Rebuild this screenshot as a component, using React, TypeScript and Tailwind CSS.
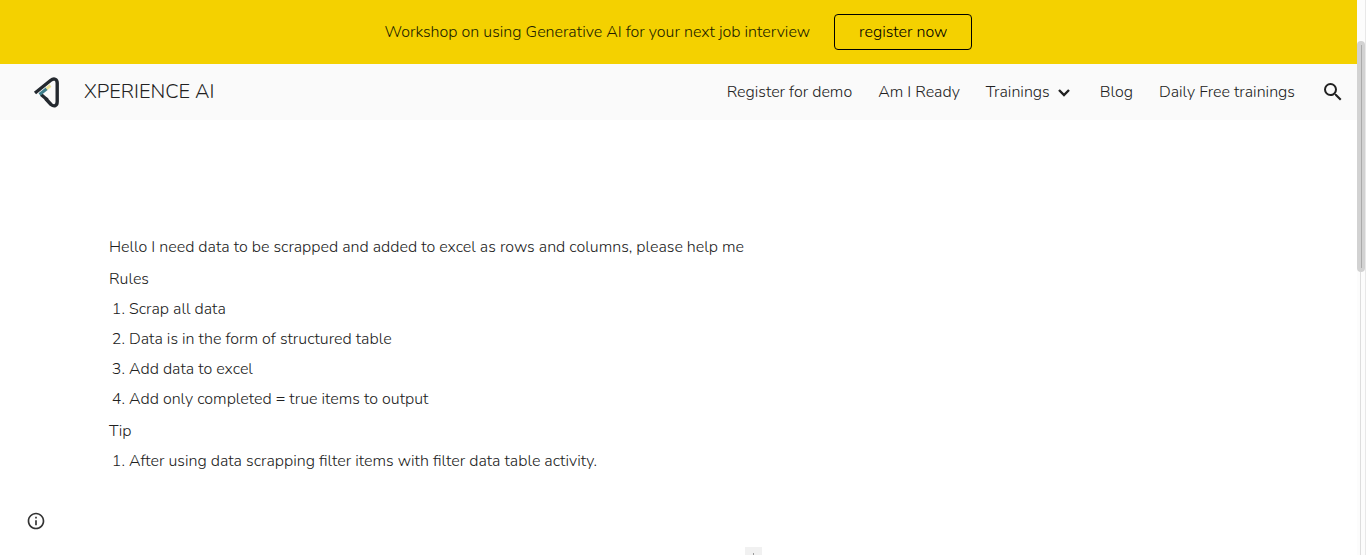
import { MdOutlineInfo, MdSearch } from "react-icons/md";

const rules = [
  "Scrap all data",
  "Data is in the form of structured table",
  "Add data to excel",
  "Add only completed = true items to output",
];

function Logo() {
  return (
    <svg viewBox="0 0 28 32" className="h-8 w-7" fill="none" aria-hidden="true">
      <path d="M9 18.500 15.500 24" stroke="#24292f" strokeWidth="3.2" />
      <path
        d="M3 17 18.500 4.500C22 1.800 25.200 3 25.200 7V25.500C25.200 30 22 31 19 28.500L13.500 22.500"
        stroke="#24292f"
        strokeWidth="3.400"
        strokeLinejoin="round"
      />
      <path d="M7.500 18.500 15 12.500" stroke="#3f7f8c" strokeWidth="3" />
      <path d="M14.500 12.800 18.500 9.500" stroke="#eee39a" strokeWidth="3" />
    </svg>
  );
}

function Chevron() {
  return (
    <svg viewBox="0 0 12 8" className="mt-0.5 h-2 w-3" fill="none" aria-hidden="true">
      <path d="M1 1 6 6 11 1" stroke="currentColor" strokeWidth="2.4" />
    </svg>
  );
}

function Banner() {
  return (
    <div className="flex h-16 items-center justify-center gap-6 bg-[#f4d100] text-base text-[#211c00]">
      <p>Workshop on using Generative AI for your next job interview</p>
      <a href="#register" className="flex h-9 items-center rounded border border-black px-6 text-black">
        register now
      </a>
    </div>
  );
}

function Header() {
  return (
    <header className="flex h-14 items-center justify-between bg-[#fafafa] pr-3 pl-8 text-[#212121]">
      <a href="#home" className="flex items-center gap-6 text-xl">
        <Logo />
        XPERIENCE AI
      </a>
      <nav className="flex items-center gap-[26px] text-base">
        <a href="#demo">Register for demo</a>
        <a href="#ready">Am I Ready</a>
        <a href="#trainings" className="flex items-center gap-2 pr-1">
          Trainings
          <Chevron />
        </a>
        <a href="#blog">Blog</a>
        <a href="#daily">Daily Free trainings</a>
        <button type="button" aria-label="Search">
          <MdSearch className="size-6" />
        </button>
      </nav>
    </header>
  );
}

export default function App() {
  return (
    <div className="flex h-screen overflow-hidden bg-white font-['Nunito','Open_Sans',sans-serif] font-light">
      <div className="flex min-w-0 flex-1 flex-col">
        <Banner />
        <Header />
        <main className="flex-1 px-[109px] pt-28 text-base leading-[30px] text-[#212121]">
          <p>Hello I need data to be scrapped and added to excel as rows and columns, please help me</p>
          <p className="mt-0.5">Rules</p>
          <ol className="list-decimal pl-5">
            {rules.map((rule) => (
              <li key={rule}>{rule}</li>
            ))}
          </ol>
          <p className="mt-0.5">Tip</p>
          <ol className="list-decimal pl-5">
            <li>After using data scrapping filter items with filter data table activity.</li>
          </ol>
        </main>
        <footer className="flex items-end justify-between">
          <button type="button" aria-label="Site information" className="mb-6 ml-[26px] text-[#333333]">
            <MdOutlineInfo className="size-5" />
          </button>
          <div className="mr-[595px] flex h-2 w-[17px] items-end justify-center bg-[#f1f1f1]">
            <span className="h-0.5 w-px bg-[#999999]" />
          </div>
        </footer>
      </div>
      <div className="flex w-[9px] flex-col border-r border-[#e8e8e8] bg-[#fcfcfc] pt-[41px]" aria-hidden="true">
        <div className="flex h-[231px] justify-center rounded bg-[#d2d2d2]">
          <span className="my-1 w-px bg-[#aaaaaa]" />
        </div>
        <div className="ml-[3px] flex-1 border-l border-[#dddddd]" />
      </div>
    </div>
  );
}
